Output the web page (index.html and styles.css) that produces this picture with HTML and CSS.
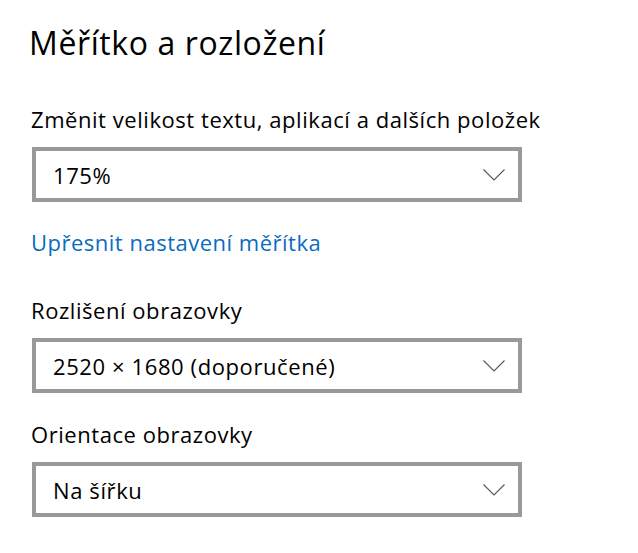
FILE: index.html
```html
<!DOCTYPE html>
<html lang="cs">
<head>
    <meta charset="UTF-8">
    <meta name="viewport" content="width=device-width, initial-scale=1.0">
    <title>Měřítko a rozložení</title>
    <link rel="stylesheet" href="styles.css">
</head>
<body>
    <div class="section">
        <h1>Měřítko a rozložení</h1>

        <div class="label label-first">Změnit velikost textu, aplikací a dalších položek</div>
        <div class="combo">
            <span>175%</span>
            <svg class="chevron" viewBox="0 0 22 12"><path d="M0.5 0.5 L11 11 L21.5 0.5" /></svg>
        </div>

        <a class="link" href="#">Upřesnit nastavení měřítka</a>

        <div class="label label-spaced">Rozlišení obrazovky</div>
        <div class="combo">
            <span>2520 × 1680 (doporučené)</span>
            <svg class="chevron" viewBox="0 0 22 12"><path d="M0.5 0.5 L11 11 L21.5 0.5" /></svg>
        </div>

        <div class="label">Orientace obrazovky</div>
        <div class="combo">
            <span>Na šířku</span>
            <svg class="chevron" viewBox="0 0 22 12"><path d="M0.5 0.5 L11 11 L21.5 0.5" /></svg>
        </div>
    </div>
</body>
</html>
```

FILE: styles.css
```css
body {
    margin: 0;
    background: #fff;
    color: #000;
    font-family: "Open Sans", "Noto Sans", sans-serif;
}
.section {
    padding: 23px 0 0 31px;
}
h1 {
    margin: 0 0 0 -2px;
    font-size: 32px;
    font-weight: 400;
    line-height: 40px;
    letter-spacing: 0.6px;
}
.label {
    margin-top: 26px;
    font-size: 22px;
    line-height: 30px;
    letter-spacing: 0.55px;
}
.label-first {
    margin-top: 41px;
}
.label-spaced {
    margin-top: 38px;
}
.combo {
    box-sizing: border-box;
    width: 490px;
    height: 55px;
    margin-top: 13px;
    margin-left: 1px;
    border: 4px solid #999;
    padding: 0 13px 0 17px;
    display: flex;
    align-items: center;
    justify-content: space-between;
    font-size: 22px;
    letter-spacing: 0.6px;
}
.chevron {
    width: 22px;
    height: 12px;
    fill: none;
    stroke: #555;
    stroke-width: 1.1;
}
.link {
    display: block;
    margin-top: 25px;
    color: #0a6cc0;
    text-decoration: none;
    font-size: 22px;
    line-height: 30px;
    letter-spacing: 0.5px;
}
```
